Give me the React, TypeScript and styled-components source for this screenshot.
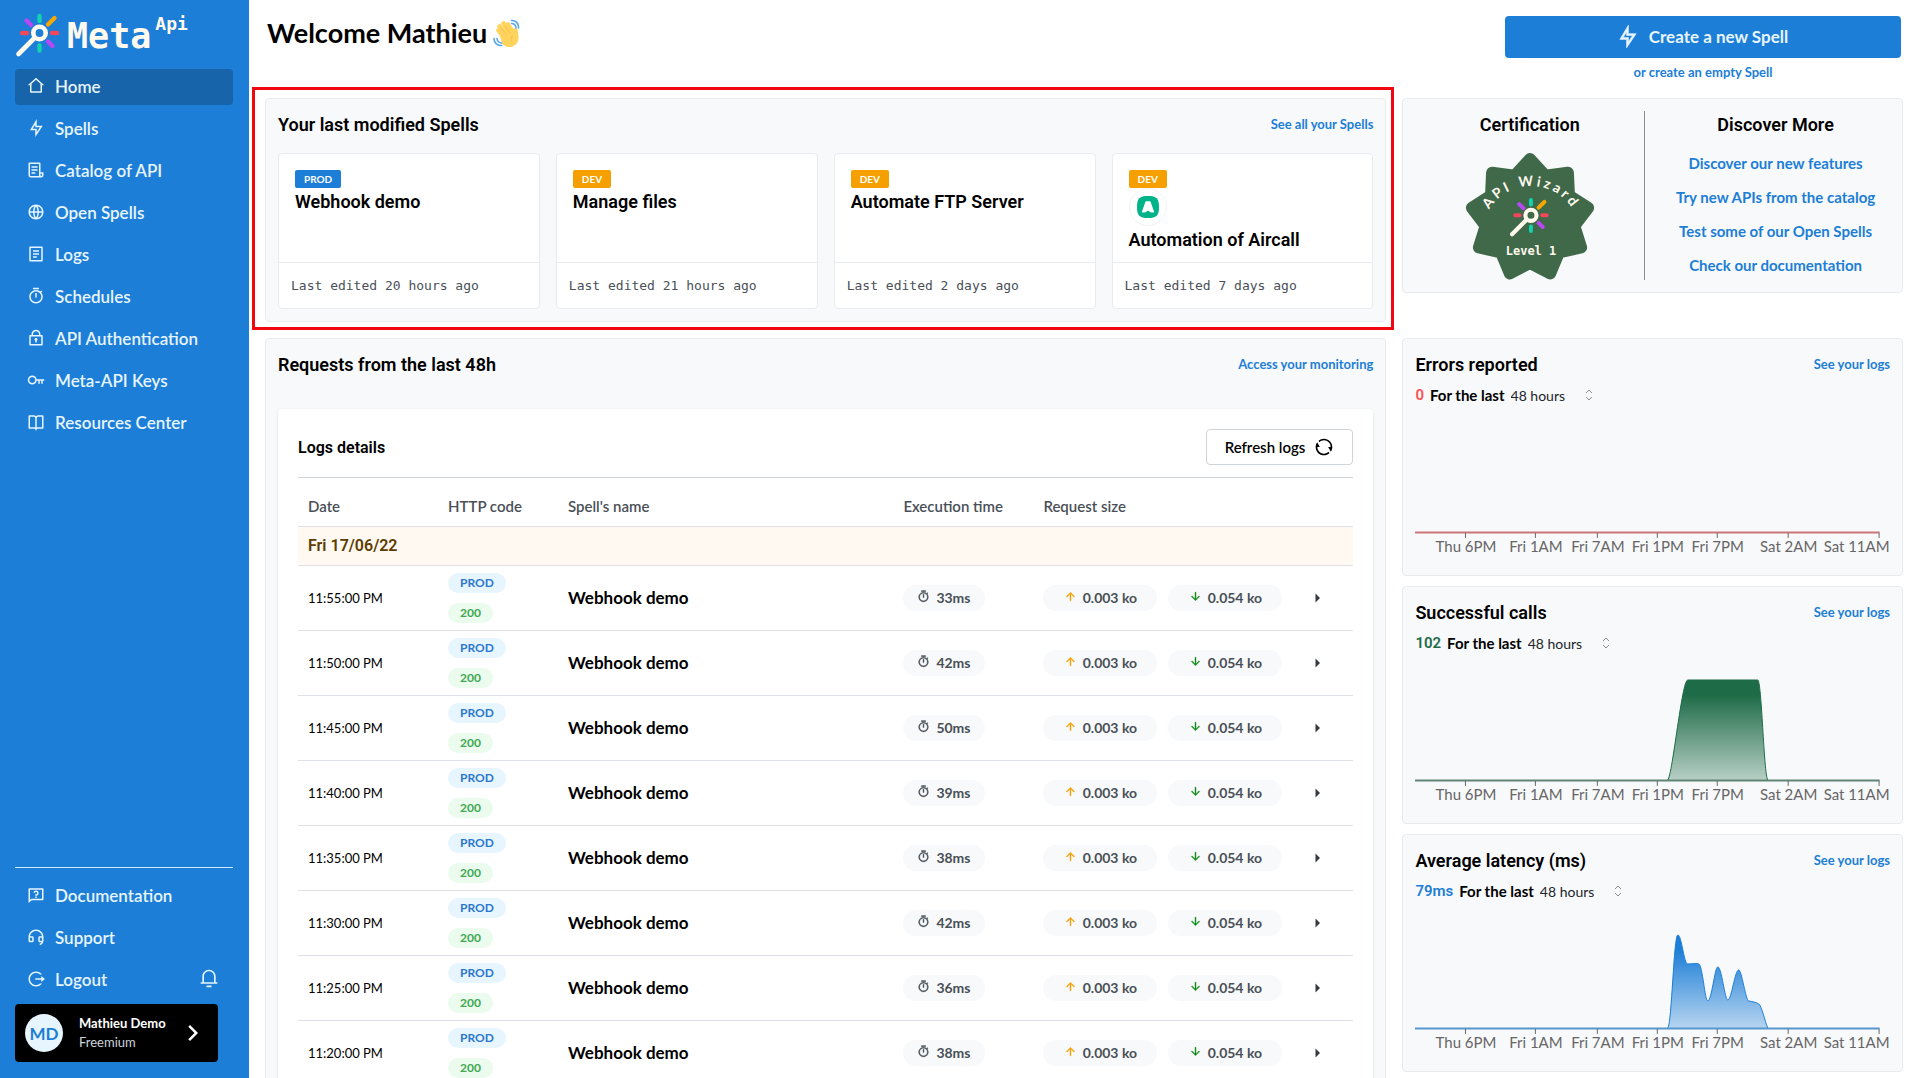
import React from "react";
import styled, { createGlobalStyle } from "styled-components";
import {
  RiHome2Line,
  RiFlashlightLine,
  RiFileList3Line,
  RiGlobalLine,
  RiFileList2Line,
  RiTimerLine,
  RiLock2Line,
  RiKeyLine,
  RiBookOpenLine,
  RiQuestionnaireLine,
  RiCustomerServiceLine,
  RiLogoutCircleRLine,
  RiNotification3Line,
  RiRefreshLine,
  RiArrowUpLine,
  RiArrowDownLine,
  RiArrowRightSFill,
  RiArrowRightSLine,
} from "react-icons/ri";

const sans = `Lato, "Liberation Sans", sans-serif`;
const heading = `Roboto, "Liberation Sans", sans-serif`;
const mono = `"DejaVu Sans Mono", "Liberation Mono", monospace`;
const blue = "#1c7ed6";

const GlobalStyle = createGlobalStyle`
  * { box-sizing: border-box; }
  body { margin: 0; background: #fff; color: #000; font-family: ${sans}; font-size: 14px; }
  h1, h2, h3, p, ul { margin: 0; padding: 0; }
  ul { list-style: none; }
  a { color: inherit; text-decoration: none; }
  button, select { font: inherit; cursor: pointer; }
`;

const Shell = styled.div`
  display: flex;
  height: 100vh;
`;

/* ---------- sidebar ---------- */

const Sidebar = styled.aside`
  flex: 0 0 249px;
  display: flex;
  flex-direction: column;
  padding: 12px 16px 16px 15px;
  background: ${blue};
  color: #fff;
`;

const Brand = styled.a`
  display: flex;
  align-items: center;
  height: 48px;
  margin-bottom: 9px;
  font-family: ${mono};
  font-weight: 700;
  color: #fff9ee;
`;

const BrandName = styled.span`
  margin-left: 4px;
  font-size: 35px;
  line-height: 48px;
`;

const BrandSuffix = styled.span`
  align-self: flex-start;
  margin-left: 4px;
  font-size: 18px;
  line-height: 24px;
`;

const NavList = styled.ul`
  display: flex;
  flex-direction: column;
  gap: 6px;
`;

const NavLink = styled.a<{ $active?: boolean }>`
  display: flex;
  align-items: center;
  gap: 10px;
  height: 36px;
  padding: 0 12px 2px;
  border-radius: 4px;
  background: ${(p) => (p.$active ? "#1864ab" : "transparent")};
  color: #e7f5ff;
  font-size: 17px;
  font-weight: 600;
  svg { width: 18px; height: 18px; }
`;

const SidebarFooter = styled.div`
  margin-top: auto;
  padding-top: 10px;
  border-top: 1px solid #d0ebff;
`;

const LogoutRow = styled.li`
  display: flex;
  align-items: center;
  justify-content: space-between;
`;

const BellButton = styled.button`
  display: flex;
  margin-right: 14px;
  padding: 0 0 4px;
  border: 0;
  background: none;
  color: #e7f5ff;
`;

const Account = styled.button`
  display: flex;
  align-items: center;
  width: 203px;
  height: 58px;
  margin-top: 6px;
  padding: 0 10px;
  border: 0;
  border-radius: 4px;
  background: #000;
  color: #fff;
  text-align: left;
`;

const Avatar = styled.span`
  display: grid;
  place-items: center;
  width: 38px;
  height: 38px;
  border-radius: 50%;
  background: #e7f5ff;
  color: ${blue};
  font-size: 17px;
  font-weight: 700;
`;

const AccountText = styled.span`
  flex: 1;
  display: flex;
  flex-direction: column;
  margin-left: 16px;
  font-size: 13px;
  line-height: 19px;
  color: #ced4da;
  strong { color: #fff; }
`;

/* ---------- main ---------- */

const Main = styled.main`
  flex: 1;
  min-width: 0;
  height: 100vh;
  padding: 16px;
  overflow-y: auto;
  scrollbar-width: none;
`;

const PageHeader = styled.header`
  display: flex;
  justify-content: space-between;
  align-items: flex-start;
  height: 82px;
  padding: 0 2px;
`;

const Title = styled.h1`
  display: flex;
  align-items: center;
  gap: 6px;
  font-size: 27px;
  line-height: 34px;
  font-weight: 700;
`;

const CreateArea = styled.div`
  display: flex;
  flex-direction: column;
  align-items: center;
  gap: 5px;
  width: 396px;
`;

const CreateButton = styled.button`
  display: flex;
  align-items: center;
  justify-content: center;
  gap: 10px;
  width: 100%;
  height: 42px;
  padding: 0 8px 2px 6px;
  border: 0;
  border-radius: 4px;
  background: ${blue};
  color: #e7f5ff;
  font-size: 17px;
  font-weight: 700;
  svg { stroke: currentColor; stroke-width: 0.6; }
`;

const TextLink = styled.a<{ $size?: number }>`
  color: ${blue};
  font-size: ${(p) => p.$size ?? 13}px;
  line-height: 18px;
  font-weight: 700;
`;

const Board = styled.div`
  display: grid;
  grid-template-columns: minmax(0, 56fr) minmax(0, 25fr);
  gap: 16px;
  align-items: start;
`;

const Panel = styled.section`
  position: relative;
  padding: 12px;
  border: 1px solid #e9ecef;
  border-radius: 4px;
  background: #f8f9fb;
`;

const Highlight = styled.div`
  position: absolute;
  inset: -12px -9px -9px -14px;
  border: 3px solid #f00710;
  pointer-events: none;
`;

const PanelHead = styled.div`
  display: flex;
  align-items: center;
  justify-content: space-between;
  height: 26px;
`;

const PanelTitle = styled.h2`
  padding-top: 2px;
  font-family: ${heading};
  font-size: 18px;
  line-height: 24px;
  font-weight: 600;
`;

const SpellGrid = styled.div`
  display: grid;
  grid-template-columns: repeat(4, minmax(0, 1fr));
  gap: 16px;
  margin-top: 16px;
`;

const SpellCard = styled.article`
  border: 1px solid #e9ecef;
  border-radius: 4px;
  background: #fff;
`;

const SpellBody = styled.div`
  display: flex;
  flex-direction: column;
  align-items: flex-start;
  height: 108px;
  padding: 16px;
`;

const EnvTag = styled.span<{ $prod?: boolean }>`
  padding: 0 9px;
  border-radius: 2px;
  background: ${(p) => (p.$prod ? blue : "#f59f00")};
  color: #fff;
  font-size: 10px;
  line-height: 18px;
  font-weight: 700;
`;

const AppIcon = styled.span`
  display: grid;
  place-items: center;
  width: 38px;
  height: 38px;
  flex: none;
  border: 1px solid #f1f3f5;
  border-radius: 50%;
`;

const SpellTitle = styled.h3`
  font-family: ${heading};
  font-size: 18px;
  line-height: 28px;
  font-weight: 600;
`;

const SpellFooter = styled.p`
  padding: 12px;
  border-top: 1px solid #e9ecef;
  color: #495057;
  font-family: ${mono};
  font-size: 13px;
  line-height: 21px;
`;

/* ---------- certification ---------- */

const CertPanel = styled(Panel)`
  display: grid;
  grid-template-columns: minmax(0, 46fr) minmax(0, 49fr);
`;

const CertHalf = styled.div<{ $divided?: boolean }>`
  display: flex;
  flex-direction: column;
  align-items: center;
  padding-left: ${(p) => (p.$divided ? 0 : 16)}px;
  border-right: ${(p) => (p.$divided ? "1px solid #868e96" : "0")};
`;

const DiscoverList = styled.ul`
  display: flex;
  flex-direction: column;
  align-items: center;
  gap: 16px;
  margin-top: 17px;
`;

/* ---------- logs ---------- */

const LogsCard = styled.div`
  margin-top: 32px;
  padding: 20px;
  border-radius: 4px;
  background: #fff;
  box-shadow: 0 1px 3px rgba(0, 0, 0, 0.12);
`;

const LogsHead = styled.div`
  display: flex;
  align-items: center;
  justify-content: space-between;
  height: 49px;
  padding-bottom: 12px;
  border-bottom: 1px solid #ced4da;
`;

const LogsTitle = styled.h3`
  font-family: ${heading};
  font-size: 16px;
  font-weight: 600;
`;

const RefreshButton = styled.button`
  display: flex;
  align-items: center;
  gap: 9px;
  height: 36px;
  padding: 0 18px;
  border: 1px solid #ced4da;
  border-radius: 4px;
  background: #fff;
  color: #000;
  font-size: 15px;
  font-weight: 600;
`;

const Table = styled.table`
  width: 100%;
  margin-top: 9px;
  border-collapse: collapse;
  table-layout: fixed;
  text-align: left;
`;

const Th = styled.th`
  height: 39px;
  padding: 0 10px;
  border-bottom: 1px solid #dee2e6;
  color: #495057;
  font-size: 15px;
  font-weight: 600;
`;

const DayCell = styled.th`
  height: 39px;
  padding: 0 10px;
  border-bottom: 1px solid #dee2e6;
  background: #fff9f2;
  color: #5c3c00;
  font-family: ${heading};
  font-size: 16px;
  font-weight: 600;
`;

const Td = styled.td<{ $strong?: boolean }>`
  height: 65px;
  padding: 0 10px;
  border-bottom: 1px solid #dee2e6;
  font-size: ${(p) => (p.$strong ? 17 : 13)}px;
  font-weight: ${(p) => (p.$strong ? 700 : 400)};
`;

const StatusStack = styled.div`
  display: flex;
  flex-direction: column;
  align-items: flex-start;
  gap: 10px;
`;

const StatusPill = styled.span<{ $ok?: boolean }>`
  padding: 0 12px;
  border-radius: 10px;
  background: ${(p) => (p.$ok ? "#ebfbee" : "#e7f5ff")};
  color: ${(p) => (p.$ok ? "#40a853" : "#2b78cc")};
  font-size: 12px;
  line-height: 20px;
  font-weight: 700;
`;

const Sizes = styled.div`
  display: grid;
  grid-template-columns: 1fr 1fr;
  gap: 11px;
  width: 239px;
`;

const Metric = styled.span<{ $tint?: string }>`
  display: inline-flex;
  align-items: center;
  justify-content: center;
  gap: 6px;
  height: 26px;
  padding: 0 14px;
  border-radius: 13px;
  background: #f8f9fa;
  color: #495057;
  font-size: 14px;
  font-weight: 700;
  svg { width: 13px; height: 13px; margin-bottom: 3px; color: ${(p) => p.$tint ?? "inherit"}; stroke: currentColor; stroke-width: 0.6; }
`;

const ExpandButton = styled.button`
  display: flex;
  padding: 0;
  border: 0;
  background: none;
  color: #343a40;
`;

/* ---------- charts ---------- */

const ChartColumn = styled.div`
  display: flex;
  flex-direction: column;
  gap: 10px;
`;

const ChartPanel = styled(Panel)`
  height: 238px;
`;

const Period = styled.div`
  display: flex;
  align-items: center;
  gap: 6px;
  height: 24px;
  margin-top: 6px;
  label { font-size: 15px; font-weight: 700; }
`;

const Value = styled.span<{ $color: string }>`
  color: ${(p) => p.$color};
  font-family: ${heading};
  font-size: 15px;
  font-weight: 600;
`;

const SelectWrap = styled.span`
  display: flex;
  align-items: center;
`;

const PeriodSelect = styled.select`
  appearance: none;
  width: 73px;
  padding: 0;
  border: 0;
  background: none;
  color: #212529;
`;

const ChartSvg = styled.svg`
  display: block;
  width: 100%;
  margin-top: 11px;
  overflow: visible;
  text { font-family: ${sans}; font-size: 15px; fill: #666; }
`;

/* ---------- drawings ---------- */

function WandShapes() {
  return (
    <g fill="none" strokeWidth="4.4" strokeLinecap="round">
      <path d="M25.5 5v5M25.5 34.500v5" stroke="#12d2b0" />
      <path d="M8 22h5M38 22h5" stroke="#f0485a" />
      <path d="M12.500 9.500l4.500 4.500M34 30.500l4.500 4.500" stroke="#b748f5" />
      <path d="M34 13.500l6.500-6.500" stroke="#f5a800" />
      <path d="M19.500 28L4.500 43" stroke="#fff9ee" strokeWidth="4.600" />
      <circle cx="25.500" cy="22" r="6.200" stroke="#fff9ee" strokeWidth="4.600" />
    </g>
  );
}

function LogoMark() {
  return (
    <svg width="48" height="48" viewBox="1 1 48 48" aria-hidden="true">
      <WandShapes />
    </svg>
  );
}

function WavingHand() {
  return (
    <svg width="28" height="28" viewBox="0 0 28 28" aria-hidden="true">
      <g fill="none" stroke="#ffd35c" strokeLinecap="round" strokeWidth="4.600">
        <path d="M5.500 11.500l7 8M6.500 7.500l9 11M10.500 4.500l8 11M14.800 5.500l6 9.500M22.500 11.500l.5 7" />
      </g>
      <path d="M6 14l14-5 5 6c1.500 5 0 9.500-4.500 12s-9.500.5-11.500-3z" fill="#ffd35c" />
      <path d="M8.500 9.500l5.500 6M12 7l5 7M19.500 17c-1.500 1.500-1.500 3-1 4.500" fill="none" stroke="#f0b840" strokeWidth="0.700" strokeLinecap="round" />
      <path d="M18.500 1.500c4-.5 7.500 3 7 7.500M18.500 4.500c2.500 0 4.300 1.800 4.500 4.500M1 19.500c0 4 3 7.500 7.500 7M4 19.500c.3 2.500 2 4.200 4.500 4.500" fill="none" stroke="#58a6e8" strokeWidth="1.600" strokeLinecap="round" />
    </svg>
  );
}

function AircallMark() {
  return (
    <svg width="22" height="22" viewBox="0 0 22 22" aria-hidden="true">
      <path d="M11 0c8.500 0 11 2.500 11 11s-2.500 11-11 11S0 19.500 0 11 2.500 0 11 0z" fill="#00b388" />
      <path d="M9.300 5.200h3.400c.5 0 .8.200 1 .700l3.300 9.600c.2.700-.2 1.200-.9 1.100l-2.500-.3c-.6 0-.9-.3-1.100-.8-.6-1.100-2.400-1.100-3 0-.2.500-.5.800-1.100.8l-2.500.3c-.7.100-1.100-.4-.9-1.100l3.300-9.600c.2-.5.500-.7 1-.7z" fill="#fff" />
    </svg>
  );
}

const starPoints = Array.from({ length: 18 }, (_, i) => {
  const radius = i % 2 === 0 ? 59 : 45;
  const angle = (i * Math.PI) / 9 - Math.PI / 2;
  return `${(66 + radius * Math.cos(angle)).toFixed(2)},${(66 + radius * Math.sin(angle)).toFixed(2)}`;
}).join(" ");

const BadgeSvg = styled.svg`
  margin-top: 15px;
  text { fill: #fff9ee; font-weight: 700; }
`;

function CertificationBadge() {
  return (
    <BadgeSvg width="132" height="128" viewBox="0 0 132 128">
      <polygon points={starPoints} fill="#40694a" stroke="#40694a" strokeWidth="12" strokeLinejoin="round" />
      <path id="badge-arc" d="M18 83a49 49 0 0 1 98 0" fill="none" />
      <text fontFamily="Lato, sans-serif" fontSize="14" letterSpacing="3">
        <textPath href="#badge-arc" startOffset="50%" textAnchor="middle">API Wizard</textPath>
      </text>
      <g transform="translate(44 43.500) scale(0.900)">
        <WandShapes />
      </g>
      <text x="67" y="103" textAnchor="middle" fontFamily="DejaVu Sans Mono, monospace" fontSize="12">Level 1</text>
    </BadgeSvg>
  );
}

function SelectorIcon() {
  return (
    <svg width="10" height="14" viewBox="0 0 10 14" fill="none" stroke="#868e96" strokeWidth="1" aria-hidden="true">
      <path d="M2 5l3-3 3 3M2 9l3 3 3-3" />
    </svg>
  );
}

/* ---------- data ---------- */

const navItems = [
  { label: "Home", Icon: RiHome2Line, active: true },
  { label: "Spells", Icon: RiFlashlightLine },
  { label: "Catalog of API", Icon: RiFileList3Line },
  { label: "Open Spells", Icon: RiGlobalLine },
  { label: "Logs", Icon: RiFileList2Line },
  { label: "Schedules", Icon: RiTimerLine },
  { label: "API Authentication", Icon: RiLock2Line },
  { label: "Meta-API Keys", Icon: RiKeyLine },
  { label: "Resources Center", Icon: RiBookOpenLine },
];

const spells = [
  { env: "PROD", title: "Webhook demo", edited: "20 hours" },
  { env: "DEV", title: "Manage files", edited: "21 hours" },
  { env: "DEV", title: "Automate FTP Server", edited: "2 days" },
  { env: "DEV", title: "Automation of Aircall", edited: "7 days", icon: true },
];

const logs = [
  ["11:55:00 PM", "33ms"],
  ["11:50:00 PM", "42ms"],
  ["11:45:00 PM", "50ms"],
  ["11:40:00 PM", "39ms"],
  ["11:35:00 PM", "38ms"],
  ["11:30:00 PM", "42ms"],
  ["11:25:00 PM", "36ms"],
  ["11:20:00 PM", "38ms"],
];

const discoverLinks = [
  "Discover our new features",
  "Try new APIs from the catalog",
  "Test some of our Open Spells",
  "Check our documentation",
];

const ticks: [number, string][] = [
  [51, "Thu 6PM"],
  [121, "Fri 1AM"],
  [183, "Fri 7AM"],
  [243, "Fri 1PM"],
  [303, "Fri 7PM"],
  [374, "Sat 2AM"],
  [465, "Sat 11AM"],
];

const charts = [
  { id: "errors", title: "Errors reported", value: "0", color: "#fa5252", line: "#c9777a", curve: "" },
  {
    id: "success",
    title: "Successful calls",
    value: "102",
    color: "#1e6b47",
    line: "#5f8577",
    curve: "M253 114C258 108 267 14 273 14L343 14C347 14 349 108 353 114",
  },
  {
    id: "latency",
    title: "Average latency (ms)",
    value: "79ms",
    color: "#1c7ed6",
    line: "#5697cd",
    curve:
      "M253 114C257 110 259 21 263 21C267 21 269 50 273 50C277 50 281 49 284 50C288 52 290 87 293 87C297 87 300 53 303 53C307 53 310 86 313 86C317 86 320 56 324 56C327 56 331 87 334 87C338 88 341 88 344 90C347 92 350 107 353 114",
  },
];

/* ---------- sections ---------- */

function Chart({ id, title, value, color, line, curve }: (typeof charts)[number]) {
  return (
    <ChartPanel>
      <PanelHead>
        <PanelTitle>{title}</PanelTitle>
        <TextLink href="#logs">See your logs</TextLink>
      </PanelHead>
      <Period>
        <Value $color={color}>{value}</Value>
        <label htmlFor={`${id}-period`}>For the last</label>
        <SelectWrap>
          <PeriodSelect id={`${id}-period`} defaultValue="48">
            <option value="48">48 hours</option>
          </PeriodSelect>
          <SelectorIcon />
        </SelectWrap>
      </Period>
      <ChartSvg viewBox="0 0 475 140" role="img" aria-label={title}>
        <defs>
          <linearGradient id={`${id}-fill`} x1="0" y1="0" x2="0" y2="1">
            <stop offset="0.15" stopColor={color} />
            <stop offset="1" stopColor={color} stopOpacity="0.3" />
          </linearGradient>
        </defs>
        {curve && <path d={`${curve}Z`} fill={`url(#${id}-fill)`} />}
        <path d="M0 114.500H465" stroke={line} strokeWidth="2" />
        {curve && <path d={curve} fill="none" stroke={color} />}
        {ticks.map(([x, label], i) => (
          <g key={label}>
            <path d={`M${x - 0.5} 115v5`} stroke="#666" />
            <text x={i === ticks.length - 1 ? 475 : x} y="134" textAnchor={i === ticks.length - 1 ? "end" : "middle"}>
              {label}
            </text>
          </g>
        ))}
      </ChartSvg>
    </ChartPanel>
  );
}

function LogRow({ time, duration }: { time: string; duration: string }) {
  return (
    <tr>
      <Td>{time}</Td>
      <Td>
        <StatusStack>
          <StatusPill>PROD</StatusPill>
          <StatusPill $ok>200</StatusPill>
        </StatusStack>
      </Td>
      <Td $strong>Webhook demo</Td>
      <Td>
        <Metric><RiTimerLine />{duration}</Metric>
      </Td>
      <Td>
        <Sizes>
          <Metric $tint="#f59f00"><RiArrowUpLine />0.003 ko</Metric>
          <Metric $tint="#12891a"><RiArrowDownLine />0.054 ko</Metric>
        </Sizes>
      </Td>
      <Td>
        <ExpandButton aria-label={`Details of ${time}`}><RiArrowRightSFill size={18} /></ExpandButton>
      </Td>
    </tr>
  );
}

export default function App() {
  return (
    <Shell>
      <GlobalStyle />
      <Sidebar>
        <Brand href="#home">
          <LogoMark />
          <BrandName>Meta</BrandName>
          <BrandSuffix>Api</BrandSuffix>
        </Brand>
        <nav>
          <NavList>
            {navItems.map(({ label, Icon, active }) => (
              <li key={label}>
                <NavLink href="#nav" $active={active}><Icon />{label}</NavLink>
              </li>
            ))}
          </NavList>
        </nav>
        <SidebarFooter>
          <NavList>
            <li><NavLink href="#docs"><RiQuestionnaireLine />Documentation</NavLink></li>
            <li><NavLink href="#support"><RiCustomerServiceLine />Support</NavLink></li>
            <LogoutRow>
              <NavLink href="#logout"><RiLogoutCircleRLine />Logout</NavLink>
              <BellButton aria-label="Notifications"><RiNotification3Line size={20} /></BellButton>
            </LogoutRow>
          </NavList>
          <Account>
            <Avatar>MD</Avatar>
            <AccountText>
              <strong>Mathieu Demo</strong>
              <span>Freemium</span>
            </AccountText>
            <RiArrowRightSLine size={30} />
          </Account>
        </SidebarFooter>
      </Sidebar>

      <Main>
        <PageHeader>
          <Title>Welcome Mathieu <WavingHand /></Title>
          <CreateArea>
            <CreateButton><RiFlashlightLine size={23} />Create a new Spell</CreateButton>
            <TextLink href="#empty">or create an empty Spell</TextLink>
          </CreateArea>
        </PageHeader>

        <Board>
          <Panel>
            <PanelHead>
              <PanelTitle>Your last modified Spells</PanelTitle>
              <TextLink href="#spells">See all your Spells</TextLink>
            </PanelHead>
            <SpellGrid>
              {spells.map((s) => (
                <SpellCard key={s.title}>
                  <SpellBody>
                    <EnvTag $prod={s.env === "PROD"}>{s.env}</EnvTag>
                    {s.icon && <AppIcon><AircallMark /></AppIcon>}
                    <SpellTitle>{s.title}</SpellTitle>
                  </SpellBody>
                  <SpellFooter>Last edited {s.edited} ago</SpellFooter>
                </SpellCard>
              ))}
            </SpellGrid>
            <Highlight />
          </Panel>

          <CertPanel>
            <CertHalf $divided>
              <PanelTitle>Certification</PanelTitle>
              <CertificationBadge />
            </CertHalf>
            <CertHalf>
              <PanelTitle>Discover More</PanelTitle>
              <DiscoverList>
                {discoverLinks.map((label) => (
                  <li key={label}><TextLink href="#discover" $size={15}>{label}</TextLink></li>
                ))}
              </DiscoverList>
            </CertHalf>
          </CertPanel>

          <Panel>
            <PanelHead>
              <PanelTitle>Requests from the last 48h</PanelTitle>
              <TextLink href="#monitoring">Access your monitoring</TextLink>
            </PanelHead>
            <LogsCard>
              <LogsHead>
                <LogsTitle>Logs details</LogsTitle>
                <RefreshButton>Refresh logs<RiRefreshLine size={20} /></RefreshButton>
              </LogsHead>
              <Table>
                <colgroup>
                  <col width="140" />
                  <col width="120" />
                  <col />
                  <col width="140" />
                  <col width="265" />
                  <col width="55" />
                </colgroup>
                <thead>
                  <tr>
                    <Th>Date</Th>
                    <Th>HTTP code</Th>
                    <Th>Spell's name</Th>
                    <Th>Execution time</Th>
                    <Th colSpan={2}>Request size</Th>
                  </tr>
                </thead>
                <tbody>
                  <tr><DayCell colSpan={6}>Fri 17/06/22</DayCell></tr>
                  {logs.map(([time, duration]) => (
                    <LogRow key={time} time={time} duration={duration} />
                  ))}
                </tbody>
              </Table>
            </LogsCard>
          </Panel>

          <ChartColumn>
            {charts.map((c) => <Chart key={c.id} {...c} />)}
          </ChartColumn>
        </Board>
      </Main>
    </Shell>
  );
}
